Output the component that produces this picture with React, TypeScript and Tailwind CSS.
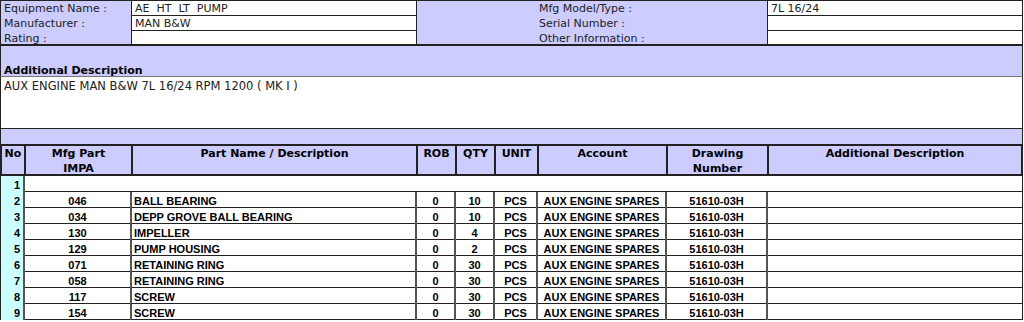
import React from 'react';

interface PartRow {
  no: number;
  impa?: string;
  name?: string;
  rob?: string;
  qty?: string;
  unit?: string;
  account?: string;
  drawing?: string;
}

const parts: PartRow[] = [
  { no: 1 },
  { no: 2, impa: '046', name: 'BALL BEARING', rob: '0', qty: '10', unit: 'PCS', account: 'AUX ENGINE SPARES', drawing: '51610-03H' },
  { no: 3, impa: '034', name: 'DEPP GROVE BALL BEARING', rob: '0', qty: '10', unit: 'PCS', account: 'AUX ENGINE SPARES', drawing: '51610-03H' },
  { no: 4, impa: '130', name: 'IMPELLER', rob: '0', qty: '4', unit: 'PCS', account: 'AUX ENGINE SPARES', drawing: '51610-03H' },
  { no: 5, impa: '129', name: 'PUMP HOUSING', rob: '0', qty: '2', unit: 'PCS', account: 'AUX ENGINE SPARES', drawing: '51610-03H' },
  { no: 6, impa: '071', name: 'RETAINING RING', rob: '0', qty: '30', unit: 'PCS', account: 'AUX ENGINE SPARES', drawing: '51610-03H' },
  { no: 7, impa: '058', name: 'RETAINING RING', rob: '0', qty: '30', unit: 'PCS', account: 'AUX ENGINE SPARES', drawing: '51610-03H' },
  { no: 8, impa: '117', name: 'SCREW', rob: '0', qty: '30', unit: 'PCS', account: 'AUX ENGINE SPARES', drawing: '51610-03H' },
  { no: 9, impa: '154', name: 'SCREW', rob: '0', qty: '30', unit: 'PCS', account: 'AUX ENGINE SPARES', drawing: '51610-03H' },
];

const tahoma = { fontFamily: '"DejaVu Sans", Verdana, sans-serif' };
const arial = { fontFamily: '"Liberation Sans", Arial, sans-serif' };

const cols = 'grid grid-cols-[24px_107px_285px_39px_39px_43px_129px_101px_1fr]';

const App: React.FC = () => {
  return (
    <div className="w-[1023px] bg-white text-[#222]" style={tahoma}>
      {/* equipment header block */}
      <div className="flex h-[46px] border-t border-l border-r border-b-2 border-[#222] text-[11px] leading-[15px]">
        <div className="w-[130px] bg-[#ccccff] pl-[3px]">
          <div className="h-[15px]">Equipment Name :</div>
          <div className="h-[15px]">Manufacturer :</div>
          <div className="h-[15px]">Rating :</div>
        </div>
        <div className="w-[286px] border-x border-[#222]">
          <div className="h-[15px] border-b border-[#222] pl-[3px]">AE&nbsp; HT&nbsp; LT&nbsp; PUMP</div>
          <div className="h-[15px] border-b border-[#222] pl-[3px]">MAN B&amp;W</div>
          <div className="h-[14px]"></div>
        </div>
        <div className="w-[350px] bg-[#ccccff] pl-[122px]">
          <div className="h-[15px]">Mfg Model/Type :</div>
          <div className="h-[15px]">Serial Number :</div>
          <div className="h-[15px]">Other Information :</div>
        </div>
        <div className="flex-1 border-l border-[#222]">
          <div className="h-[15px] border-b border-[#222] pl-[3px]">7L 16/24</div>
          <div className="h-[15px] border-b border-[#222]"></div>
          <div className="h-[14px]"></div>
        </div>
      </div>

      {/* additional description */}
      <div className="flex h-[31px] items-end border-x border-b border-x-[#222] border-b-[#777] bg-[#ccccff] pl-[3px] text-[11px] font-bold leading-[11px] text-black">
        Additional Description
      </div>
      <div className="h-[52px] border border-t-0 border-[#222] pl-[3px] pt-[2px] text-[11.5px] leading-[14px]">
        AUX ENGINE MAN B&amp;W 7L 16/24 RPM 1200 ( MK I )
      </div>
      <div className="h-[15px] border-x border-[#222] bg-[#ccccff]"></div>

      {/* parts table header */}
      <div className={`${cols} h-[32px] border-2 border-[#222] bg-[#ccccff] text-[11px] font-bold leading-[15px] text-black`}>
        <div className="border-r-2 border-[#222] text-center">No</div>
        <div className="border-r-2 border-[#222] text-center">Mfg Part<br />IMPA</div>
        <div className="border-r-2 border-[#222] text-center">Part Name / Description</div>
        <div className="border-r-2 border-[#222] text-center">ROB</div>
        <div className="border-r-2 border-[#222] text-center">QTY</div>
        <div className="border-r-2 border-[#222] text-center">UNIT</div>
        <div className="border-r-2 border-[#222] text-center">Account</div>
        <div className="border-r-2 border-[#222] text-center">Drawing<br />Number</div>
        <div className="text-center">Additional Description</div>
      </div>

      {/* parts rows */}
      <div className="border-x border-[#222] text-[11px] font-bold leading-[14px] text-black" style={arial}>
        {parts.map((p) => (
          <div key={p.no} className={`${cols} h-[16px] border-b border-[#222]`}>
            <div className="border-r-2 border-[#555] bg-[#ccffff] pr-[3px] pt-[2px] text-right">{p.no}</div>
            {p.impa === undefined ? (
              <div className="col-span-8"></div>
            ) : (
              <>
                <div className="border-r-2 border-[#555] pt-[2px] text-center">{p.impa}</div>
                <div className="border-r-2 border-[#555] pl-[2px] pt-[2px]">{p.name}</div>
                <div className="border-r-2 border-[#555] pt-[2px] text-center">{p.rob}</div>
                <div className="border-r-2 border-[#555] pt-[2px] text-center">{p.qty}</div>
                <div className="border-r-2 border-[#555] pt-[2px] text-center">{p.unit}</div>
                <div className="border-r-2 border-[#555] pt-[2px] text-center">{p.account}</div>
                <div className="border-r-2 border-[#555] pt-[2px] text-center">{p.drawing}</div>
                <div></div>
              </>
            )}
          </div>
        ))}
      </div>
    </div>
  );
};

export default App;
